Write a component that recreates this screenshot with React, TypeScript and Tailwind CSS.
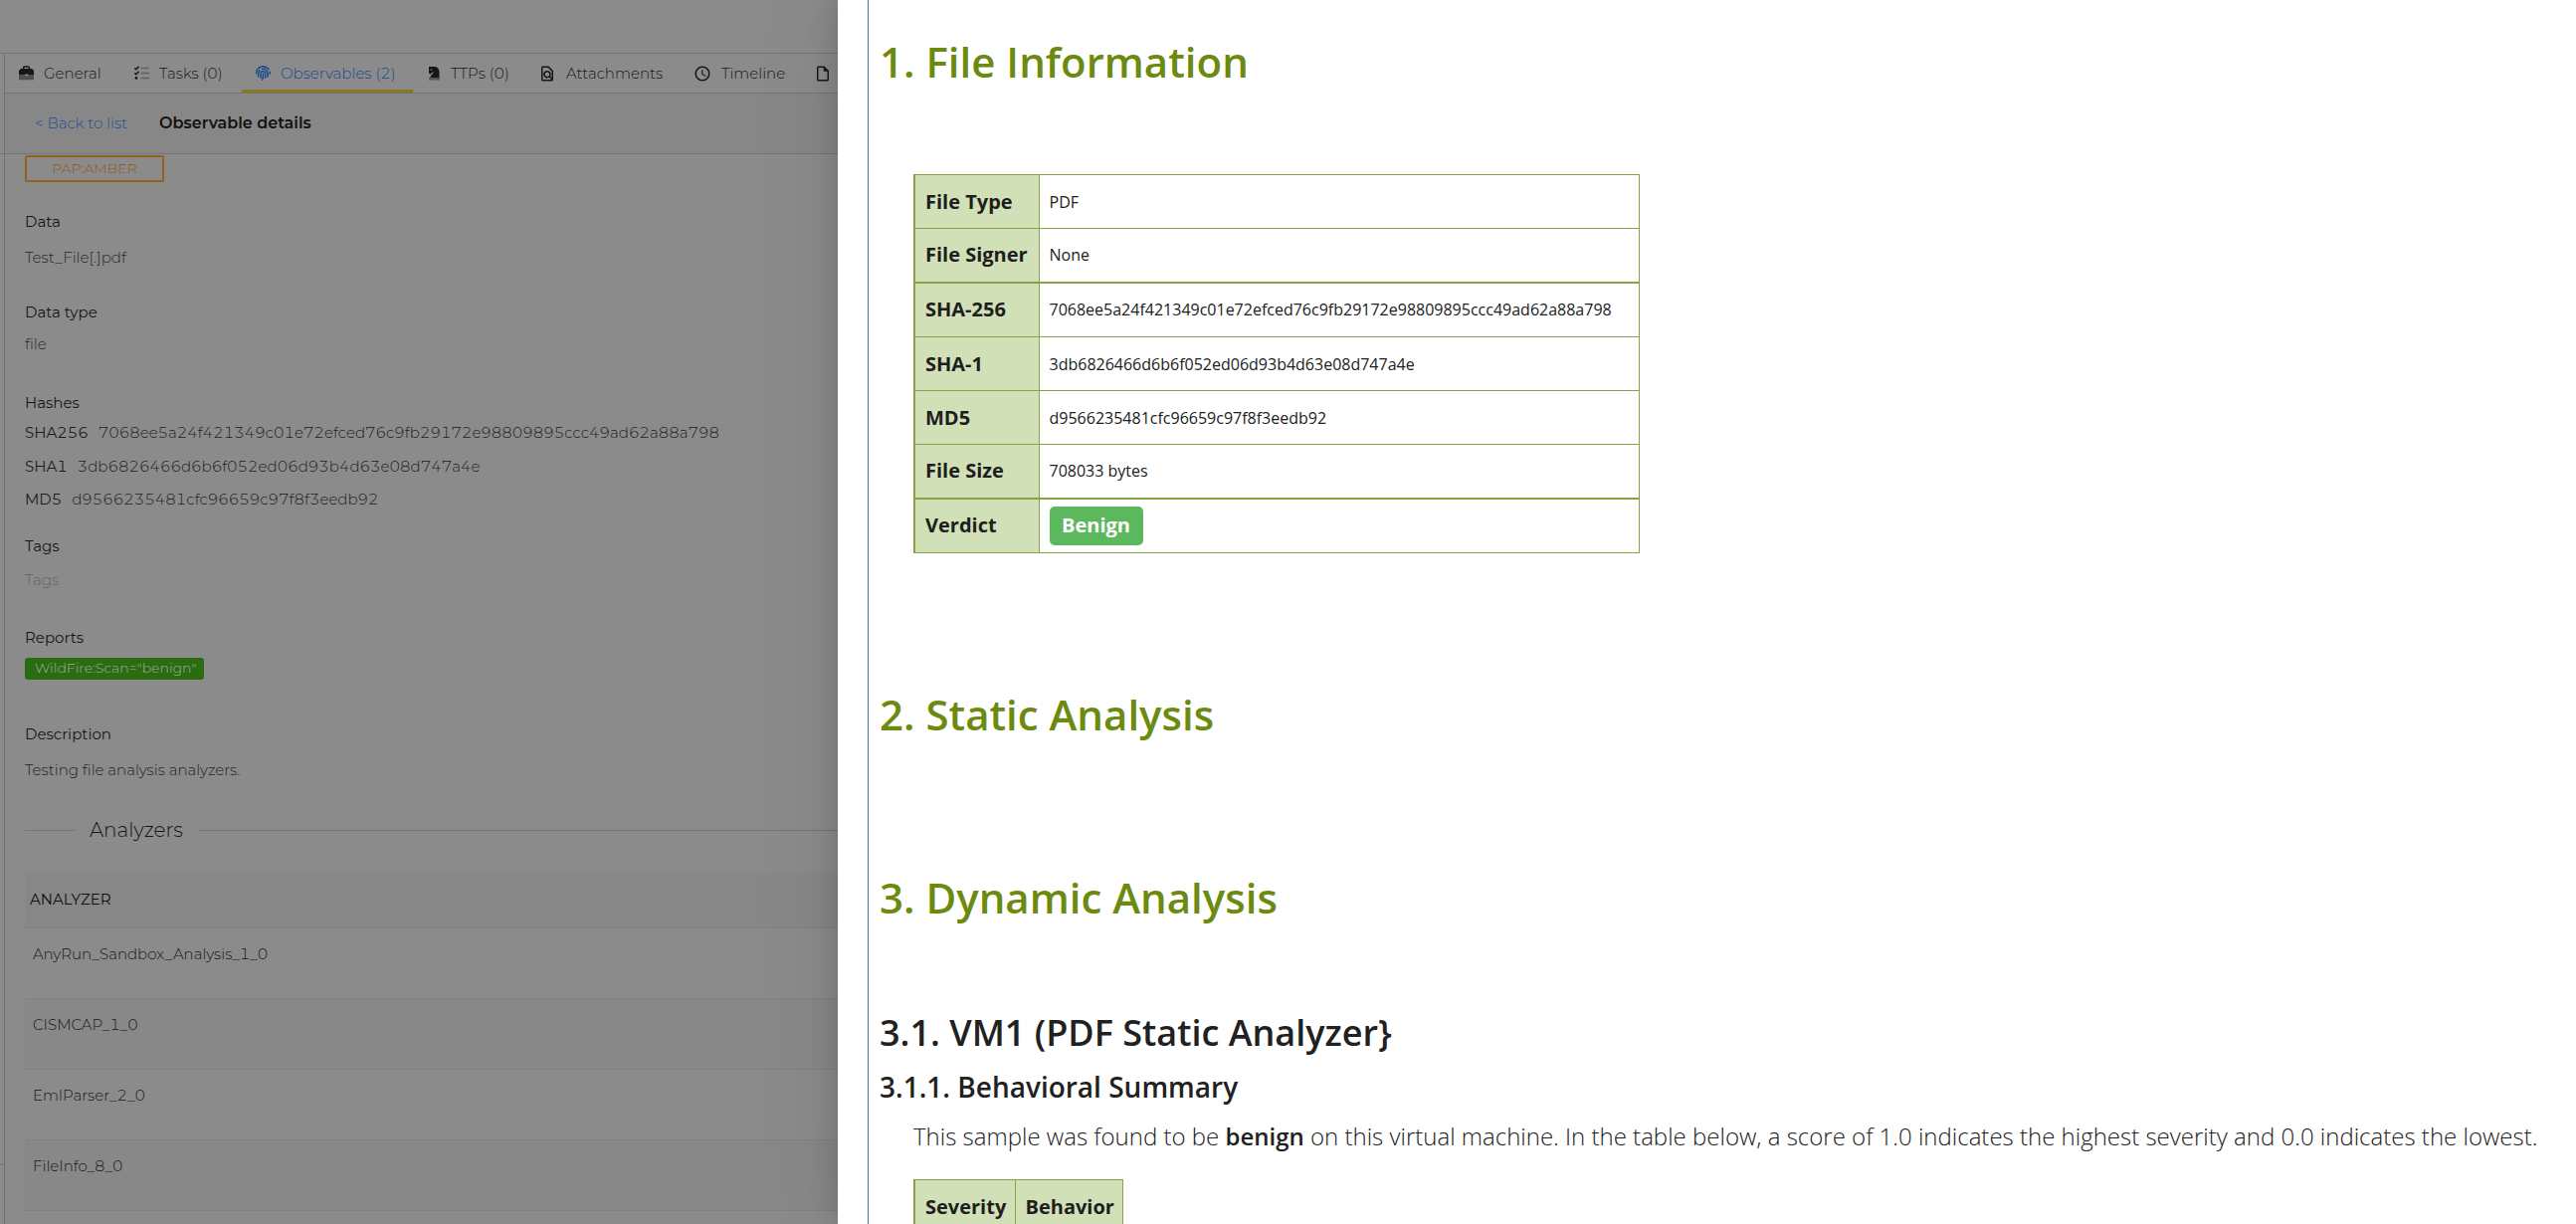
import React from "react";
import { FaFingerprint } from "react-icons/fa";
import { MdOutlineFindInPage, MdSchedule, MdOutlineInsertDriveFile } from "react-icons/md";

const SHA256 = "7068ee5a24f421349c01e72efced76c9fb29172e98809895ccc49ad62a88a798";
const SHA1 = "3db6826466d6b6f052ed06d93b4d63e08d747a4e";
const MD5 = "d9566235481cfc96659c97f8f3eedb92";

function ToolboxIcon() {
  return (
    <svg viewBox="0 0 15 15" className="h-[15px] w-[15px]" aria-hidden="true">
      <path d="M4.6 4V2.2q0-1.2 1.2-1.2h3.4q1.2 0 1.2 1.2V4" fill="none" stroke="#161616" strokeWidth="1.4" />
      <path d="M0 9V5l2-2h11l2 2v4z" fill="#161616" />
      <path d="M0 9h15v4.4q0 .9-.9.9H.9q-.9 0-.9-.9z" fill="#4f4f4f" />
      <rect x="6" y="8.4" width="3.4" height="1.8" rx=".9" fill="#8b8b8b" />
    </svg>
  );
}

function ChecklistIcon() {
  return (
    <svg viewBox="0 0 15 15" className="h-[15px] w-[15px]" aria-hidden="true">
      <g fill="none" stroke="#161616" strokeWidth="1.5">
        <path d="M.4 2.4l1.3 1.3L4.6.8M.4 7.4l1.3 1.3 2.9-2.9" />
      </g>
      <circle cx="2" cy="12.4" r="1.4" fill="#161616" />
      <path d="M6.5 2.5h8.5M6.5 7.5h8.5M6.5 12.5h8.5" stroke="#616161" strokeWidth="1.5" />
    </svg>
  );
}

function KnightIcon() {
  return (
    <svg viewBox="0 0 12 15" className="h-[15px] w-[12px]" aria-hidden="true">
      <path d="M0 1h5.5C9 1 10.5 3.5 10.5 6.500V12H1.500c0-2.500 1.500-3 3-4.500V6L1.500 8.500 0 7.500z" fill="#161616" />
      <circle cx="2.300" cy="4" r=".7" fill="#8b8b8b" />
      <rect x="0" y="12" width="11" height="2.500" fill="#595959" />
    </svg>
  );
}

const tabs = [
  { label: "General", icon: <ToolboxIcon />, width: "w-[116px]" },
  { label: "Tasks (0)", icon: <ChecklistIcon />, width: "w-[122px]" },
  { label: "Observables (2)", icon: <FaFingerprint size={15} />, width: "w-[172px]", active: true },
  { label: "TTPs (0)", icon: <KnightIcon />, width: "w-[110px]" },
  { label: "Attachments", icon: <MdOutlineFindInPage size={18} />, width: "w-[156px]" },
  { label: "Timeline", icon: <MdSchedule size={18} />, width: "w-[121px]" },
];

const analyzers = ["AnyRun_Sandbox_Analysis_1_0", "CISMCAP_1_0", "EmlParser_2_0", "FileInfo_8_0"];

function Hash({ name, value, className }: { name: string; value: string; className: string }) {
  return (
    <div className={"flex gap-2.5 text-[#1c1c1c] " + className}>
      <dt className="font-normal">{name}</dt>
      <dd className="font-light">{value}</dd>
    </div>
  );
}

function ObservablePage() {
  return (
    <div className="flex w-[842px] shrink-0 flex-col overflow-hidden bg-[#8b8b8b] font-['Montserrat','Inter',sans-serif] text-[15px] leading-5 text-[#161616] tabular-nums">
      <div className="h-[54px] shrink-0 border-b border-[#747474]" />
      <div className="flex min-h-0 grow">
        <div className="flex w-[5px] shrink-0 flex-col border-r border-[#727272]">
          <div className="h-[101px] shrink-0 border-b border-[#747474]" />
          <div className="h-[1016px] shrink-0 border-b border-[#747474]" />
        </div>
        <main className="min-w-0 grow">
          <nav className="flex h-[40px] border-b border-[#747474]">
            {tabs.map((t) => (
              <button
                key={t.label}
                type="button"
                className={
                  "flex shrink-0 items-center gap-2.5 border-b-3 pt-[3px] pl-[14px] text-left whitespace-nowrap font-light " +
                  t.width +
                  (t.active ? " mr-0.5 border-[#89761f] text-[#0f4b8b]" : " border-transparent text-[#161616]")
                }
              >
                {t.icon}
                <span>{t.label}</span>
              </button>
            ))}
            <button type="button" aria-label="Report" className="flex shrink-0 items-center border-b-3 border-transparent pt-[3px] pl-[14px]">
              <MdOutlineInsertDriveFile size={18} />
            </button>
          </nav>
          <header className="flex h-[61px] items-center gap-8 border-b border-[#747474] bg-[#878787] pl-[30px]">
            <a href="#list" className="font-light text-[#1f4f90]">
              &lt; Back to list
            </a>
            <h1 className="text-base font-semibold text-[#111]">Observable details</h1>
          </header>

          <section className="pt-px pl-5">
            <div className="flex h-[27px] w-[140px] items-center justify-center rounded-xs border-2 border-[#96611c] pb-0.5 text-sm font-light text-[#935820]">
              PAP:AMBER
            </div>
            <h2 className="mt-[30px]">Data</h2>
            <p className="mt-4 font-light text-[#262626]">Test_File[.]pdf</p>
            <h2 className="mt-[35px]">Data type</h2>
            <p className="mt-3 font-light text-[#262626]">file</p>
            <h2 className="mt-[39px]">Hashes</h2>
            <dl>
              <Hash name="SHA256" value={SHA256} className="mt-2.5" />
              <Hash name="SHA1" value={SHA1} className="mt-[14px]" />
              <Hash name="MD5" value={MD5} className="mt-[13px]" />
            </dl>
            <h2 className="mt-[27px]">Tags</h2>
            <p className="mt-[14px] font-light text-[#646464]">Tags</p>
            <h2 className="mt-[38px]">Reports</h2>
            <button type="button" className="mt-2.5 flex h-[22px] w-[180px] items-center rounded-[3px] bg-[#2b6c10] pb-0.5 pl-2.5 text-sm font-light whitespace-nowrap text-[#a3ab9f]">
              WildFire:Scan="benign"
            </button>
            <h2 className="mt-[45px]">Description</h2>
            <p className="mt-4 font-light text-[#222]">Testing file analysis analyzers.</p>

            <div className="mt-9 flex h-7 items-center gap-[15px]">
              <div className="h-px w-[50px] bg-[#747474]" />
              <h2 className="text-xl font-light">Analyzers</h2>
              <div className="h-px grow bg-[#747474]" />
            </div>

            <table className="mt-[29px] w-full border-collapse text-left">
              <thead>
                <tr className="h-[55px] border-b border-[#818181] bg-[#878787]">
                  <th className="pl-[5px] font-normal text-[#111]">ANALYZER</th>
                </tr>
              </thead>
              <tbody>
                {analyzers.map((a) => (
                  <tr key={a} className="h-[71px] border-b border-[#818181] align-top even:bg-[#888]">
                    <td className="pt-4 pl-2 font-light">{a}</td>
                  </tr>
                ))}
              </tbody>
            </table>
          </section>
        </main>
      </div>
    </div>
  );
}

const info: { name: string; value: React.ReactNode; thick?: boolean }[] = [
  { name: "File Type", value: "PDF" },
  { name: "File Signer", value: "None" },
  { name: "SHA-256", value: SHA256, thick: true },
  { name: "SHA-1", value: SHA1 },
  { name: "MD5", value: MD5 },
  { name: "File Size", value: "708033 bytes" },
  {
    name: "Verdict",
    value: (
      <span className="flex h-[39px] w-[94px] items-center justify-center rounded-[5px] bg-[#5cb85c] text-xl font-bold text-white">
        Benign
      </span>
    ),
    thick: true,
  },
];

function ReportDrawer() {
  return (
    <aside className="relative min-w-0 grow overflow-hidden bg-white pl-[30px] font-['Segoe_UI','Open_Sans',sans-serif] text-[#212121] shadow-[-4px_0_24px_rgba(0,0,0,0.14),0_0_90px_rgba(0,0,0,0.08)]">
      <div className="h-full border-l border-[#337ab7] pl-[11px]">
        <h1 className="pt-8 text-[42px] leading-[60px] font-semibold text-[#6c8a10]">1. File Information</h1>
        <table className="mt-[83px] ml-[34px] w-[730px] border-collapse border border-l-2 border-[#8ba147] text-left">
          <tbody>
            {info.map((r) => (
              <tr key={r.name} className={"border-[#8ba147] " + (r.thick ? "h-[55px] border-t-2" : "h-[54px] border-t")}>
                <th scope="row" className="w-[125px] border-r border-[#8ba147] bg-[#d2e0b7] pl-2.5 text-xl font-bold whitespace-nowrap text-[#1e1e1e]">
                  {r.name}
                </th>
                <td className="pl-2.5 text-base">{r.value}</td>
              </tr>
            ))}
          </tbody>
        </table>
        <h1 className="mt-[132px] text-[42px] leading-[60px] font-semibold text-[#6c8a10]">2. Static Analysis</h1>
        <h1 className="mt-[124px] text-[42px] leading-[60px] font-semibold text-[#6c8a10]">3. Dynamic Analysis</h1>
        <h2 className="mt-[82px] text-4xl leading-12 font-semibold">3.1. VM1 (PDF Static Analyzer{"}"}</h2>
        <h3 className="mt-[10px] text-[28px] leading-10 font-semibold">3.1.1. Behavioral Summary</h3>
        <p className="mt-3 ml-[34px] text-2xl leading-9 font-light whitespace-nowrap">
          This sample was found to be <b className="font-semibold">benign</b> on this virtual machine. In the table below, a score of 1.0 indicates the highest severity and 0.0 indicates the lowest.
        </p>
        <table className="mt-[25px] ml-[34px] w-[211px] border-collapse border border-l-2 border-[#8ba147] bg-[#d2e0b7] text-left">
          <thead>
            <tr className="h-[54px] text-xl font-bold text-[#1e1e1e]">
              <th className="w-[101px] border-r border-[#8ba147] pl-2.5">Severity</th>
              <th className="pl-2.5">Behavior</th>
            </tr>
          </thead>
        </table>
      </div>
    </aside>
  );
}

export default function App() {
  return (
    <div className="flex h-screen w-full overflow-hidden">
      <ObservablePage />
      <ReportDrawer />
    </div>
  );
}
